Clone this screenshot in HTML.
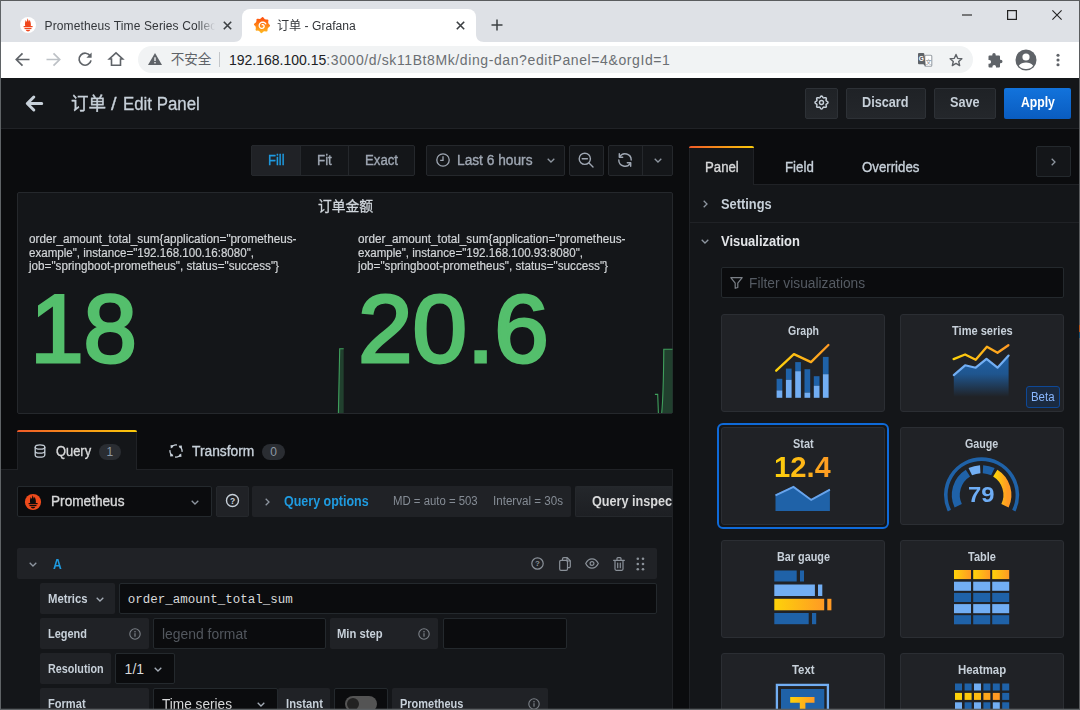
<!DOCTYPE html>
<html lang="zh">
<head>
<meta charset="utf-8">
<title>订单 - Grafana</title>
<style>
*{box-sizing:border-box;margin:0;padding:0}
html,body{width:1080px;height:710px;overflow:hidden;background:#0b0c0e}
body{font-family:"Liberation Sans","Noto Sans CJK SC",sans-serif;font-size:14px;color:#c7d0d9;position:relative}
.a{position:absolute}
.t{position:absolute;white-space:nowrap;line-height:1;transform-origin:0 50%}
svg{position:absolute;overflow:visible}
/* ---------- chrome ---------- */
#tabstrip{left:0;top:0;width:1080px;height:42px;background:#dee1e6}
#toolbar{left:0;top:42px;width:1080px;height:36px;background:#fff}
#omni{left:138px;top:46.300px;width:835px;height:26.500px;border-radius:13.500px;background:#f1f3f4}
#acttab{left:242px;top:9px;width:234px;height:33px;background:#fff;border-radius:8px 8px 0 0}
.ch{color:#202124;font-family:"Liberation Sans","Noto Sans CJK SC",sans-serif}
/* ---------- grafana ---------- */
#ghead{left:0;top:78px;width:1080px;height:51px;background:#141619;border-bottom:1px solid #202226}
.btn{position:absolute;background:#202226;border:1px solid #25272b;border-radius:2px}
.panelbg{background:#141619;border:1px solid #202226}
.inp{position:absolute;background:#0b0c0e;border:1px solid #2c3235;border-radius:3px}
.lbl{position:absolute;background:#202226;border-radius:2px}
.card{position:absolute;width:164px;height:98px;background:#202226;border:1px solid #2c3033;border-radius:3px}
.ct{position:absolute;left:0;width:164px;text-align:center;top:9px;font-size:12px;font-weight:bold;color:#c7d0d9;line-height:14px}
.b12{font-size:12px;font-weight:bold;color:#c7d0d9}
</style>
</head>
<body>
<div class="a" id="tabstrip"></div><div class="a" id="toolbar"></div><div class="a" id="omni"></div><div class="a" id="acttab"></div>
<!-- inactive tab -->
<svg style="left:20.200px;top:17.400px" width="16" height="16" viewBox="0 0 16 16"><circle cx="8" cy="8" r="8" fill="#fff"/><path d="M5.200 9C4.600 6.500 5.300 5 5.600 3C6.200 4 6.500 4.500 6.800 5C7 3.500 7.300 2.500 7.600 1.300C8.200 2.800 8.600 3.800 8.900 4.800C9.200 4.200 9.400 3.500 9.650 2.800C10.300 4.500 11.300 6.500 10.800 9z" fill="#f0461c"/><rect x="3.600" y="9" width="9" height="1.200" fill="#f0461c"/><rect x="4.500" y="10.900" width="7" height="1.200" fill="#f0461c"/><path d="M5.700 12.800h4.600c-.4 1.100-1.300 1.700-2.300 1.700s-1.900-.6-2.300-1.700z" fill="#f0461c"/></svg>
<svg style="left:222.500px;top:21px" width="9" height="9" viewBox="0 0 9 9"><path d="M.8.800l7.400 7.400M8.200.800L.8 8.200" stroke="#3c4043" stroke-width="1.600" fill="none"/></svg>
<!-- active tab curves -->
<svg style="left:234px;top:34px" width="8" height="8" viewBox="0 0 8 8"><path d="M0 8h8V0c0 5-3 8-8 8z" fill="#fff"/></svg>
<svg style="left:476px;top:34px" width="8" height="8" viewBox="0 0 8 8"><path d="M8 8H0V0c0 5 3 8 8 8z" fill="#fff"/></svg>
<!-- grafana favicon -->
<svg id="gfav" style="left:253.500px;top:17.200px" width="16" height="16" viewBox="0 0 16 16"><defs><linearGradient id="gfg" x1="0" y1="0" x2="0" y2="1"><stop offset="0" stop-color="#ff4a0c"/><stop offset="1" stop-color="#ffbb22"/></linearGradient></defs><path d="M7.49 0.76Q8.78 -0.87 9.78 0.96Q10.77 2.78 12.83 2.55Q14.89 2.31 14.31 4.31Q13.72 6.30 15.34 7.59Q16.97 8.88 15.14 9.88Q13.32 10.87 13.55 12.93Q13.79 14.99 11.79 14.41Q9.80 13.82 8.51 15.44Q7.22 17.07 6.22 15.24Q5.23 13.42 3.17 13.65Q1.11 13.89 1.69 11.89Q2.28 9.90 0.66 8.61Q-0.97 7.32 0.86 6.32Q2.68 5.33 2.45 3.27Q2.21 1.21 4.21 1.79Q6.20 2.38 7.49 0.76z" fill="url(#gfg)"/><path d="M11.85 6.85L11.35 6.27L10.75 5.80L10.10 5.47L9.40 5.26L8.69 5.20L7.99 5.26L7.34 5.46L6.74 5.77L6.23 6.17L5.81 6.66L5.50 7.20L5.30 7.78L5.22 8.38L5.25 8.96L5.39 9.52L5.63 10.02L5.95 10.46L6.34 10.82L6.77 11.10L7.24 11.28L7.72 11.36L8.20 11.35L8.65 11.25L9.06 11.07L9.41 10.83L9.70 10.53L9.93 10.19L10.07 9.83L10.14 9.46L10.14 9.09L10.07 8.75L9.94 8.44L9.76 8.18L9.53 7.96L9.29 7.80L9.03 7.70L8.76 7.66L8.51 7.67L8.28 7.73L8.07 7.82" fill="none" stroke="#fff" stroke-width="1.300" stroke-linecap="round"/></svg>
<svg style="left:455.500px;top:21px" width="9" height="9" viewBox="0 0 9 9"><path d="M.8.800l7.400 7.400M8.200.800L.8 8.200" stroke="#3c4043" stroke-width="1.600" fill="none"/></svg>
<svg style="left:491px;top:19px" width="12" height="12" viewBox="0 0 12 12"><path d="M6 .500v11M.5 6h11" stroke="#3c4043" stroke-width="1.500" fill="none"/></svg>
<!-- window controls -->
<svg style="left:962px;top:14.200px" width="10" height="2" viewBox="0 0 10 2"><rect width="10" height="1.200" y=".4" fill="#333"/></svg>
<svg style="left:1007px;top:9.600px" width="10" height="10" viewBox="0 0 10 10"><rect x=".6" y=".6" width="8.800" height="8.800" fill="none" stroke="#222" stroke-width="1.200"/></svg>
<svg style="left:1051.800px;top:9.600px" width="10" height="10" viewBox="0 0 10 10"><path d="M.4.400l9.200 9.200M9.600.400L.4 9.600" stroke="#222" stroke-width="1.100" fill="none"/></svg>
<!-- toolbar nav icons -->
<svg style="left:15px;top:52px" width="15" height="15" viewBox="0 0 15 15"><path d="M14.500 7.500H1.800M7.500 1.300L1.300 7.500l6.200 6.200" stroke="#5f6368" stroke-width="1.700" fill="none"/></svg>
<svg style="left:46px;top:52px" width="15" height="15" viewBox="0 0 15 15"><path d="M.5 7.500h12.700M7.500 1.300l6.200 6.200-6.200 6.200" stroke="#bdc1c6" stroke-width="1.700" fill="none"/></svg>
<svg style="left:77px;top:51px" width="16" height="16" viewBox="0 0 16 16"><path d="M13.300 5.200A6 6 0 1 0 14 9.300" stroke="#5f6368" stroke-width="1.700" fill="none"/><path d="M14.600 1.500v5.200H9.400z" fill="#5f6368"/></svg>
<svg style="left:108px;top:51px" width="16" height="16" viewBox="0 0 16 16"><path d="M8 1.800L1.300 8h2.200v6.300h9V8h2.200z" stroke="#5f6368" stroke-width="1.600" fill="none" stroke-linejoin="miter"/></svg>
<!-- omnibox content -->
<svg style="left:148px;top:53px" width="14" height="12" viewBox="0 0 14 12"><path d="M7 0l7 12H0z" fill="#5f6368"/><rect x="6.300" y="4.300" width="1.400" height="3.700" fill="#f1f3f4"/><rect x="6.300" y="9" width="1.400" height="1.400" fill="#f1f3f4"/></svg>
<div class="a" style="left:218.500px;top:52px;width:1px;height:15px;background:#c4c7ca"></div>
<!-- translate icon -->
<svg style="left:918px;top:52.800px" width="14" height="14" viewBox="0 0 14 14"><rect x="6.800" y="2.200" width="7" height="11" rx="1" fill="#fff" stroke="#9aa0a6" stroke-width="1.100"/><text x="7.500" y="10.800" font-size="6" fill="#80868b" font-family="Noto Sans CJK SC,sans-serif">文</text><path d="M0 1a1 1 0 0 1 1-1h4.500l.8.800L7.700 13.200 5.300 11.200H1a1 1 0 0 1-1-1z" fill="#5f6368"/><text x=".7" y="8" font-size="6.500" font-weight="bold" fill="#fff" font-family="Liberation Sans,sans-serif">G</text></svg>
<!-- star -->
<svg style="left:949.200px;top:52.700px" width="14" height="14" viewBox="0 0 16 16"><path d="M8 1.700l1.900 4.400 4.800.4-3.600 3.200 1.100 4.700L8 11.900l-4.200 2.500 1.100-4.700-3.600-3.200 4.800-.4z" stroke="#5f6368" stroke-width="1.600" fill="none" stroke-linejoin="round"/></svg>
<!-- puzzle -->
<svg style="left:987.700px;top:52.500px" width="15" height="15" viewBox="0 0 15 15"><path d="M6 0a1.700 1.700 0 0 1 1.700 1.700V2.500h3.300a1 1 0 0 1 1 1v3.300h.8a1.700 1.700 0 0 1 0 3.400H12v3.300a1 1 0 0 1-1 1H8v-.8a1.800 1.800 0 0 0-3.600 0v.8H1.500a1 1 0 0 1-1-1V10.700h.8a1.800 1.800 0 0 0 0-3.600H.5V3.500a1 1 0 0 1 1-1h2.800V1.700A1.700 1.700 0 0 1 6 0z" fill="#5f6368"/></svg>
<!-- profile -->
<svg style="left:1015px;top:49px" width="22" height="22" viewBox="0 0 22 22"><circle cx="11" cy="11" r="10.500" fill="#5f6368"/><circle cx="11" cy="8" r="3.600" fill="#fff"/><path d="M3.800 16.700c1.600-2.300 4.400-3.200 7.200-3.200s5.600.9 7.200 3.200A9 9 0 0 1 11 20a9 9 0 0 1-7.200-3.300z" fill="#fff"/></svg>
<!-- menu dots -->
<svg style="left:1056px;top:52px" width="4" height="16" viewBox="0 0 4 16"><circle cx="2" cy="3.300" r="1.550" fill="#5f6368"/><circle cx="2" cy="8" r="1.550" fill="#5f6368"/><circle cx="2" cy="12.700" r="1.550" fill="#5f6368"/></svg>


<div class="t" style="left:44.5px;top:20.04px;font-size:12px;color:#33363a;width:172px;overflow:hidden;-webkit-mask-image:linear-gradient(90deg,#000 152px,transparent 170px);letter-spacing:.13px;">Prometheus Time Series Collection and Processing Server</div>
<div class="t" style="left:277.2px;top:20.04px;font-size:12px;color:#33363a;transform:scaleX(1.0099);">订单 - Grafana</div>
<div class="t" style="left:170.7px;top:52.66px;font-size:13.6px;color:#5f6368;">不安全</div>
<div class="t" style="left:229px;top:52.76px;font-size:14px;color:#202124;">192.168.100.15<span style="color:#6b6f73;letter-spacing:.6px">:3000/d/sk11Bt8Mk/ding-dan?editPanel=4&amp;orgId=1</span></div>
<div class="a" id="ghead"></div>
<svg style="left:25px;top:95px" width="18" height="17" viewBox="0 0 18 17"><path d="M16.700 8.500H2.800M8.800 2L2.300 8.500l6.500 6.500" stroke="#c7d0d9" stroke-width="3" fill="none" stroke-linecap="round" stroke-linejoin="round"/></svg>
<div class="t" style="left:71.2px;top:94.51px;font-size:18px;color:#c7d0d9;transform:scaleX(0.9722);-webkit-text-stroke:.4px;">订单</div>
<div class="t" style="left:111.3px;top:94.51px;font-size:18px;color:#c7d0d9;transform:scaleX(1.1165);-webkit-text-stroke:.3px;">/</div>
<div class="t" style="left:123.3px;top:94.51px;font-size:18px;color:#c7d0d9;transform:scaleX(0.9359);-webkit-text-stroke:.3px;">Edit Panel</div>
<div class="a" style="left:805px;top:88px;width:33px;height:31px;border:1px solid #2d3136;border-radius:2px;background:linear-gradient(180deg,#1f2226,#24272b);"></div>
<svg style="left:813.900px;top:94.800px" width="15" height="15" viewBox="0 0 15 15"><path d="M7.50 1.00L7.92 1.11L8.30 1.43L8.62 1.86L8.89 2.31L9.14 2.67L9.41 2.88L9.76 2.93L10.19 2.85L10.69 2.72L11.23 2.64L11.72 2.69L12.10 2.90L12.31 3.28L12.36 3.77L12.28 4.31L12.15 4.81L12.07 5.24L12.12 5.59L12.33 5.86L12.69 6.11L13.14 6.38L13.57 6.70L13.89 7.08L14.00 7.50L13.89 7.92L13.57 8.30L13.14 8.62L12.69 8.89L12.33 9.14L12.12 9.41L12.07 9.76L12.15 10.19L12.28 10.69L12.36 11.23L12.31 11.72L12.10 12.10L11.72 12.31L11.23 12.36L10.69 12.28L10.19 12.15L9.76 12.07L9.41 12.12L9.14 12.33L8.89 12.69L8.62 13.14L8.30 13.57L7.92 13.89L7.50 14.00L7.08 13.89L6.70 13.57L6.38 13.14L6.11 12.69L5.86 12.33L5.59 12.12L5.24 12.07L4.81 12.15L4.31 12.28L3.77 12.36L3.28 12.31L2.90 12.10L2.69 11.72L2.64 11.23L2.72 10.69L2.85 10.19L2.93 9.76L2.88 9.41L2.67 9.14L2.31 8.89L1.86 8.62L1.43 8.30L1.11 7.92L1.00 7.50L1.11 7.08L1.43 6.70L1.86 6.38L2.31 6.11L2.67 5.86L2.88 5.59L2.93 5.24L2.85 4.81L2.72 4.31L2.64 3.77L2.69 3.28L2.90 2.90L3.28 2.69L3.77 2.64L4.31 2.72L4.81 2.85L5.24 2.93L5.59 2.88L5.86 2.67L6.11 2.31L6.38 1.86L6.70 1.43L7.08 1.11z" fill="none" stroke="#c7d0d9" stroke-width="1.500" stroke-linejoin="round"/><circle cx="7.500" cy="7.500" r="2" fill="none" stroke="#c7d0d9" stroke-width="1.400"/></svg>
<div class="a" style="left:846px;top:88px;width:80px;height:31px;border:1px solid #2d3136;border-radius:2px;background:linear-gradient(180deg,#1f2226,#24272b);"></div>
<div class="t" style="left:862.05px;top:95.46px;font-size:14px;color:#c7d0d9;font-weight:bold;transform:scaleX(0.9054);">Discard</div>
<div class="a" style="left:934px;top:88px;width:62px;height:31px;border:1px solid #2d3136;border-radius:2px;background:linear-gradient(180deg,#1f2226,#24272b);"></div>
<div class="t" style="left:949.6px;top:95.46px;font-size:14px;color:#c7d0d9;font-weight:bold;transform:scaleX(0.9051);">Save</div>
<div class="a" style="left:1004px;top:88px;width:67px;height:31px;border-radius:2px;background:linear-gradient(180deg,#1273dc,#0a5cc0);"></div>
<div class="t" style="left:1020.55px;top:95.46px;font-size:14px;color:#fff;font-weight:bold;transform:scaleX(0.8717);">Apply</div>
<div class="a" style="left:251px;top:145px;width:163.5px;height:31px;background:#141619;border:1px solid #25282c;border-radius:2px;"></div>
<div class="a" style="left:251px;top:145px;width:50px;height:31px;background:#202226;border:1px solid #25282c;border-radius:2px;border-radius:2px 0 0 2px;"></div>
<div class="a" style="left:348px;top:145px;width:1px;height:31px;background:#25282c;"></div>
<div class="t" style="left:268px;top:152.86px;font-size:14px;color:#1f9be0;transform:scaleX(0.9279);-webkit-text-stroke:.35px;">Fill</div>
<div class="t" style="left:317.2px;top:152.86px;font-size:14px;color:#9fa7b3;transform:scaleX(0.9510);-webkit-text-stroke:.35px;">Fit</div>
<div class="t" style="left:364.8px;top:152.86px;font-size:14px;color:#9fa7b3;transform:scaleX(0.9424);-webkit-text-stroke:.35px;">Exact</div>
<div class="a" style="left:426px;top:145px;width:138.5px;height:31px;background:#141619;border:1px solid #25282c;border-radius:2px;"></div>
<svg style="left:436px;top:153px" width="14" height="14" viewBox="0 0 14 14"><circle cx="7" cy="7" r="6.200" fill="none" stroke="#9fa7b3" stroke-width="1.300"/><path d="M7 3.300V7.300H4.200" fill="none" stroke="#9fa7b3" stroke-width="1.300"/></svg>
<div class="t" style="left:457px;top:152.86px;font-size:14px;color:#9fa7b3;transform:scaleX(0.9797);-webkit-text-stroke:.35px;">Last 6 hours</div>
<svg style="left:546.5px;top:157.5px" width="8" height="5" viewBox="0 0 8 5"><path d="M.7.700l3.300 3.300L7.300.700" fill="none" stroke="#8e96a0" stroke-width="1.300"/></svg>
<div class="a" style="left:569px;top:145px;width:35px;height:31px;background:#141619;border:1px solid #25282c;border-radius:2px;"></div>
<svg style="left:578px;top:152px" width="16" height="16" viewBox="0 0 16 16"><circle cx="6.800" cy="6.800" r="5.600" fill="none" stroke="#9fa7b3" stroke-width="1.400"/><path d="M4.200 6.800h5.200M11 11l4 4" fill="none" stroke="#9fa7b3" stroke-width="1.400" stroke-linecap="round"/></svg>
<div class="a" style="left:608px;top:145px;width:65px;height:31px;background:#141619;border:1px solid #25282c;border-radius:2px;"></div>
<div class="a" style="left:642px;top:145px;width:1px;height:31px;background:#25282c;"></div>
<svg style="left:617.200px;top:152px" width="16" height="16" viewBox="0 0 16 16"><path d="M2.600 4.900A6.200 6.200 0 0 1 14.200 8M13.400 11.100A6.200 6.200 0 0 1 1.800 8" fill="none" stroke="#9fa7b3" stroke-width="1.400" stroke-linecap="round"/><path d="M2.300 1.800v3.400h3.400M13.700 14.200v-3.400h-3.400" fill="none" stroke="#9fa7b3" stroke-width="1.400" stroke-linecap="round" stroke-linejoin="round"/></svg>
<svg style="left:653.5px;top:157.5px" width="8" height="5" viewBox="0 0 8 5"><path d="M.7.700l3.300 3.300L7.300.700" fill="none" stroke="#8e96a0" stroke-width="1.300"/></svg>
<div class="a" style="left:17px;top:192px;width:656px;height:222px;background:#141619;border:1px solid #25282c;border-radius:2px;"></div>
<div class="t" style="left:317.5px;top:199.36px;font-size:14px;color:#d0d6dc;transform:scaleX(0.9821);-webkit-text-stroke:.3px;">订单金额</div>
<div class="t" style="left:29px;top:232.94px;font-size:12px;color:#d2d5d8;transform:scaleX(0.9783);-webkit-text-stroke:.2px;">order_amount_total_sum{application=&quot;prometheus-</div>
<div class="t" style="left:29px;top:246.74px;font-size:12px;color:#d2d5d8;transform:scaleX(0.9644);-webkit-text-stroke:.2px;">example&quot;, instance=&quot;192.168.100.16:8080&quot;,</div>
<div class="t" style="left:29px;top:260.04px;font-size:12px;color:#d2d5d8;transform:scaleX(0.9746);-webkit-text-stroke:.2px;">job=&quot;springboot-prometheus&quot;, status=&quot;success&quot;}</div>
<div class="t" style="left:30.2px;top:281.3px;font-size:96px;color:#54bf6c;-webkit-text-stroke:3px;">18</div>
<div class="t" style="left:357.7px;top:232.94px;font-size:12px;color:#d2d5d8;transform:scaleX(0.9783);-webkit-text-stroke:.2px;">order_amount_total_sum{application=&quot;prometheus-</div>
<div class="t" style="left:357.7px;top:246.74px;font-size:12px;color:#d2d5d8;transform:scaleX(0.9644);-webkit-text-stroke:.2px;">example&quot;, instance=&quot;192.168.100.93:8080&quot;,</div>
<div class="t" style="left:357.7px;top:260.04px;font-size:12px;color:#d2d5d8;transform:scaleX(0.9746);-webkit-text-stroke:.2px;">job=&quot;springboot-prometheus&quot;, status=&quot;success&quot;}</div>
<div class="t" style="left:358px;top:281.3px;font-size:96px;color:#54bf6c;transform:scaleX(1.0210);-webkit-text-stroke:3px;">20.6</div>
<svg style="left:0;top:0" width="1080" height="710" viewBox="0 0 1080 710"><path d="M338.400 413L339.700 348.800H343.700V413z" fill="#21402e"/><path d="M338.400 413L339.700 348.800H343.700" fill="none" stroke="#3f9f5c" stroke-width="1.100"/><path d="M661.700 413C663 400 663.500 385 663.800 349.300H672.500V413z" fill="#21402e"/><path d="M654.900 394.400h2.800l.7 18.600M661.700 413C663 400 663.500 385 663.800 349.300H672.500" fill="none" stroke="#3f9f5c" stroke-width="1.100"/></svg>
<div class="a" style="left:1px;top:469px;width:671.5px;height:240px;background:#141619;border-top:1px solid #202226;border-right:1px solid #202226;"></div>
<div class="a" style="left:17px;top:430px;width:120px;height:40px;background:#141619;border:1px solid #202226;border-bottom:none;border-radius:2px 2px 0 0;"></div>
<div class="a" style="left:17px;top:430px;width:120px;height:2px;background:linear-gradient(90deg,#f05a28,#fbca0a);border-radius:2px 2px 0 0;"></div>
<svg style="left:34px;top:444px" width="12" height="14" viewBox="0 0 12 14"><ellipse cx="6" cy="3" rx="4.800" ry="2.200" fill="none" stroke="#c7d0d9" stroke-width="1.300"/><path d="M1.200 3v8c0 1.200 2.100 2.200 4.800 2.200s4.800-1 4.800-2.200V3M1.200 7c0 1.200 2.100 2.200 4.800 2.200S10.800 8.200 10.800 7" fill="none" stroke="#c7d0d9" stroke-width="1.300"/></svg>
<div class="t" style="left:55.6px;top:443.96px;font-size:14px;color:#d8d9da;transform:scaleX(0.9207);-webkit-text-stroke:.35px;">Query</div>
<div class="a" style="left:99px;top:444px;width:22px;height:16px;background:#2a2d32;border-radius:8px;"></div>
<div class="t" style="left:106.56px;top:445.74px;font-size:12px;color:#8e99a4;">1</div>
<svg style="left:168.500px;top:443.500px" width="14" height="14" viewBox="0 0 14 14"><g transform="rotate(0 7 7)"><path d="M7.900 1A6.100 6.100 0 0 0 4 1.700" fill="none" stroke="#c7d0d9" stroke-width="1.300"/><path d="M1.500 1.200L4.700 1L3.900 3.300L1.800 4.400z" fill="#c7d0d9"/></g><g transform="rotate(90 7 7)"><path d="M7.900 1A6.100 6.100 0 0 0 4 1.700" fill="none" stroke="#c7d0d9" stroke-width="1.300"/><path d="M1.500 1.200L4.700 1L3.900 3.300L1.800 4.400z" fill="#c7d0d9"/></g><g transform="rotate(180 7 7)"><path d="M7.900 1A6.100 6.100 0 0 0 4 1.700" fill="none" stroke="#c7d0d9" stroke-width="1.300"/><path d="M1.500 1.200L4.700 1L3.900 3.300L1.800 4.400z" fill="#c7d0d9"/></g><g transform="rotate(270 7 7)"><path d="M7.900 1A6.100 6.100 0 0 0 4 1.700" fill="none" stroke="#c7d0d9" stroke-width="1.300"/><path d="M1.500 1.200L4.700 1L3.900 3.300L1.800 4.400z" fill="#c7d0d9"/></g></svg>
<div class="t" style="left:191.7px;top:443.96px;font-size:14px;color:#c7d0d9;transform:scaleX(0.9845);-webkit-text-stroke:.35px;">Transform</div>
<div class="a" style="left:262px;top:444px;width:23px;height:16px;background:#2a2d32;border-radius:8px;"></div>
<div class="t" style="left:270.16px;top:445.74px;font-size:12px;color:#8e99a4;">0</div>
<div class="a" style="left:17px;top:486px;width:194.5px;height:30.5px;background:#0b0c0e;border:1px solid #24292d;border-radius:2px;"></div>
<svg style="left:25px;top:494.2px" width="16" height="16" viewBox="0 0 16 16"><circle cx="8" cy="8" r="8.100" fill="#ee4b1c"/><path d="M5.200 9C4.600 6.500 5.300 5 5.600 3C6.200 4 6.500 4.500 6.800 5C7 3.500 7.300 2.500 7.600 1.300C8.200 2.800 8.600 3.800 8.900 4.800C9.200 4.200 9.400 3.500 9.650 2.800C10.300 4.500 11.300 6.500 10.800 9z" fill="#0d0b0b"/><rect x="3.600" y="9" width="9" height="1.200" fill="#0d0b0b"/><rect x="4.500" y="10.900" width="7" height="1.200" fill="#0d0b0b"/><path d="M5.700 12.800h4.600c-.4 1.100-1.300 1.700-2.300 1.700s-1.900-.6-2.300-1.700z" fill="#0d0b0b"/></svg>
<div class="t" style="left:50.6px;top:494.36px;font-size:14px;color:#d8d9da;transform:scaleX(0.9737);-webkit-text-stroke:.35px;">Prometheus</div>
<svg style="left:190.5px;top:499.5px" width="8" height="5" viewBox="0 0 8 5"><path d="M.7.700l3.300 3.300L7.300.700" fill="none" stroke="#8e96a0" stroke-width="1.300"/></svg>
<div class="a" style="left:215.5px;top:486px;width:33.5px;height:30.5px;background:#202226;border:1px solid #25282c;border-radius:2px;"></div>
<svg style="left:225.600px;top:494px" width="13" height="13" viewBox="0 0 13 13"><circle cx="6.500" cy="6.500" r="6" fill="none" stroke="#c7d0d9" stroke-width="1.400"/><text x="6.500" y="9.600" font-size="8.500" font-weight="bold" fill="#c7d0d9" text-anchor="middle" font-family="Liberation Sans,sans-serif">?</text></svg>
<div class="a" style="left:252px;top:486px;width:319px;height:30.5px;background:#202226;border-radius:2px;"></div>
<svg style="left:264.5px;top:497.5px" width="5" height="8" viewBox="0 0 5 8"><path d="M.7.700l3.300 3.300L.7 7.300" fill="none" stroke="#8e96a0" stroke-width="1.300"/></svg>
<div class="t" style="left:284px;top:494.36px;font-size:14px;color:#1f9be0;font-weight:bold;transform:scaleX(0.8914);">Query options</div>
<div class="t" style="left:393px;top:494.94px;font-size:12px;color:#858c95;transform:scaleX(0.9475);">MD = auto = 503</div>
<div class="t" style="left:493px;top:494.94px;font-size:12px;color:#858c95;transform:scaleX(0.9672);">Interval = 30s</div>
<div class="a" style="left:575px;top:486px;width:97px;height:30.5px;border:1px solid #25282c;border-radius:2px;background:linear-gradient(180deg,#24272b,#1d1f23);border-right:none;border-radius:2px 0 0 2px;"></div>
<div class="t" style="left:592px;top:494.16px;font-size:14px;color:#d8d9da;font-weight:bold;transform:scaleX(0.9034);clip-path:inset(0 17.5% 0 0);">Query inspector</div>
<div class="a" style="left:17px;top:548px;width:639.5px;height:31px;background:#202226;border-radius:2px;"></div>
<svg style="left:28.5px;top:561.5px" width="8" height="5" viewBox="0 0 8 5"><path d="M.7.700l3.300 3.300L7.300.700" fill="none" stroke="#8e96a0" stroke-width="1.300"/></svg>
<div class="t" style="left:52.6px;top:557.16px;font-size:14px;color:#1f9be0;font-weight:bold;transform:scaleX(0.8691);">A</div>
<svg style="left:531px;top:557px" width="13" height="13" viewBox="0 0 13 13"><circle cx="6.500" cy="6.500" r="5.700" fill="none" stroke="#8a9199" stroke-width="1.200"/><text x="6.500" y="9.400" font-size="8" font-weight="bold" fill="#8a9199" text-anchor="middle" font-family="Liberation Sans,sans-serif">?</text></svg>
<svg style="left:558.500px;top:556.500px" width="12" height="14" viewBox="0 0 12 14"><path d="M3.500 3.200V2a1.300 1.300 0 0 1 1.300-1.300h3.400L11.300 3.800V9.300a1.300 1.300 0 0 1-1.300 1.300H8.500M8 .800V4h3.200" fill="none" stroke="#8a9199" stroke-width="1.200"/><rect x=".7" y="3.300" width="7.800" height="10" rx="1.300" fill="none" stroke="#8a9199" stroke-width="1.200"/></svg>
<svg style="left:585px;top:558px" width="14" height="11" viewBox="0 0 14 11"><path d="M.7 5.500C2.200 2.500 4.400.900 7 .900s4.800 1.600 6.300 4.600C11.800 8.500 9.600 10.100 7 10.100S2.200 8.500.7 5.500z" fill="none" stroke="#8a9199" stroke-width="1.200"/><circle cx="7" cy="5.500" r="1.900" fill="none" stroke="#8a9199" stroke-width="1.200"/></svg>
<svg style="left:613px;top:556.500px" width="12" height="14" viewBox="0 0 12 14"><path d="M.6 3.300h10.800M4 3.200V1.600a.9.900 0 0 1 .9-.9h2.200a.9.900 0 0 1 .9.900v1.600M2 3.400v8.700a1.200 1.200 0 0 0 1.200 1.200h5.600a1.200 1.200 0 0 0 1.200-1.200V3.400M4.700 6v4.700M7.300 6v4.700" fill="none" stroke="#8a9199" stroke-width="1.200" stroke-linecap="round"/></svg>
<svg style="left:635.500px;top:556.500px" width="9" height="14" viewBox="0 0 9 14"><g fill="#8a9199"><circle cx="1.800" cy="1.800" r="1.300"/><circle cx="7" cy="1.800" r="1.300"/><circle cx="1.800" cy="7" r="1.300"/><circle cx="7" cy="7" r="1.300"/><circle cx="1.800" cy="12.200" r="1.300"/><circle cx="7" cy="12.200" r="1.300"/></g></svg>
<div class="a" style="left:40px;top:583px;width:75px;height:31px;background:#202226;border-radius:2px;"></div>
<div class="t" style="left:47.6px;top:592.84px;font-size:12px;color:#c7d0d9;font-weight:bold;transform:scaleX(0.9422);">Metrics</div>
<svg style="left:95.5px;top:597.0px" width="8" height="5" viewBox="0 0 8 5"><path d="M.7.700l3.300 3.300L7.300.700" fill="none" stroke="#a4acb6" stroke-width="1.300"/></svg>
<div class="a" style="left:119px;top:583px;width:537.5px;height:31px;background:#0b0c0e;border:1px solid #24292d;border-radius:2px;"></div>
<div class="t" style="left:127.8px;top:593.69px;font-size:12.5px;color:#d8d9da;font-family:'Liberation Mono','DejaVu Sans Mono',monospace;">order_amount_total_sum</div>
<div class="a" style="left:40px;top:618px;width:109px;height:31px;background:#202226;border-radius:2px;"></div>
<div class="t" style="left:47.6px;top:627.74px;font-size:12px;color:#c7d0d9;font-weight:bold;transform:scaleX(0.9116);">Legend</div>
<svg style="left:128.6px;top:627.8px" width="12" height="12" viewBox="0 0 12 12"><circle cx="6" cy="6" r="5.200" fill="none" stroke="#7b8087" stroke-width="1.100"/><circle cx="6" cy="3.700" r=".8" fill="#7b8087"/><rect x="5.400" y="5.200" width="1.200" height="3.500" fill="#7b8087"/></svg>
<div class="a" style="left:153px;top:618px;width:172.5px;height:31px;background:#0b0c0e;border:1px solid #24292d;border-radius:2px;"></div>
<div class="t" style="left:162px;top:626.96px;font-size:14px;color:#52575e;transform:scaleX(0.9929);">legend format</div>
<div class="a" style="left:329.5px;top:618px;width:108.5px;height:31px;background:#202226;border-radius:2px;"></div>
<div class="t" style="left:337.2px;top:627.74px;font-size:12px;color:#c7d0d9;font-weight:bold;transform:scaleX(0.9369);">Min step</div>
<svg style="left:418.2px;top:627.8px" width="12" height="12" viewBox="0 0 12 12"><circle cx="6" cy="6" r="5.200" fill="none" stroke="#7b8087" stroke-width="1.100"/><circle cx="6" cy="3.700" r=".8" fill="#7b8087"/><rect x="5.400" y="5.200" width="1.200" height="3.500" fill="#7b8087"/></svg>
<div class="a" style="left:442.5px;top:618px;width:124.5px;height:31px;background:#0b0c0e;border:1px solid #24292d;border-radius:2px;"></div>
<div class="a" style="left:40px;top:653px;width:71px;height:31px;background:#202226;border-radius:2px;"></div>
<div class="t" style="left:47.6px;top:662.74px;font-size:12px;color:#c7d0d9;font-weight:bold;transform:scaleX(0.8984);">Resolution</div>
<div class="a" style="left:115px;top:653px;width:59.5px;height:31px;background:#0b0c0e;border:1px solid #24292d;border-radius:2px;"></div>
<div class="t" style="left:124.6px;top:661.96px;font-size:14px;color:#d8d9da;">1/1</div>
<svg style="left:154px;top:667.0px" width="8" height="5" viewBox="0 0 8 5"><path d="M.7.700l3.300 3.300L7.300.700" fill="none" stroke="#a4acb6" stroke-width="1.300"/></svg>
<div class="a" style="left:40px;top:688px;width:109px;height:31px;background:#202226;border-radius:2px;"></div>
<div class="t" style="left:47.6px;top:697.84px;font-size:12px;color:#c7d0d9;font-weight:bold;transform:scaleX(0.9245);">Format</div>
<div class="a" style="left:153px;top:688px;width:124.5px;height:31px;background:#0b0c0e;border:1px solid #24292d;border-radius:2px;"></div>
<div class="t" style="left:162px;top:696.96px;font-size:14px;color:#d8d9da;transform:scaleX(0.9745);">Time series</div>
<svg style="left:257.4px;top:702.0px" width="8" height="5" viewBox="0 0 8 5"><path d="M.7.700l3.300 3.300L7.300.700" fill="none" stroke="#a4acb6" stroke-width="1.300"/></svg>
<div class="a" style="left:278px;top:688px;width:51.5px;height:31px;background:#202226;border-radius:2px;"></div>
<div class="t" style="left:285.8px;top:697.84px;font-size:12px;color:#c7d0d9;font-weight:bold;transform:scaleX(0.9379);">Instant</div>
<div class="a" style="left:333.5px;top:688px;width:54.0px;height:31px;background:#0b0c0e;border:1px solid #24292d;border-radius:2px;"></div>
<div class="a" style="left:345px;top:695.7px;width:32px;height:16.0px;background:#545454;border-radius:8px;"></div>
<div class="a" style="left:347px;top:697.8px;width:12px;height:12.0px;background:#222222;border-radius:6px;"></div>
<div class="a" style="left:391.5px;top:688px;width:156.5px;height:31px;background:#202226;border-radius:2px;"></div>
<div class="t" style="left:400.4px;top:697.84px;font-size:12px;color:#c7d0d9;font-weight:bold;transform:scaleX(0.9141);">Prometheus</div>
<svg style="left:527.7px;top:697.8px" width="12" height="12" viewBox="0 0 12 12"><circle cx="6" cy="6" r="5.200" fill="none" stroke="#7b8087" stroke-width="1.100"/><circle cx="6" cy="3.700" r=".8" fill="#7b8087"/><rect x="5.400" y="5.200" width="1.200" height="3.500" fill="#7b8087"/></svg>
<div class="a" style="left:689px;top:184px;width:390px;height:526px;background:#141619;border-top:1px solid #202226;border-left:1px solid #202226;"></div>
<div class="a" style="left:689px;top:146px;width:65px;height:39px;background:#141619;border:1px solid #202226;border-bottom:none;border-radius:2px 2px 0 0;"></div>
<div class="a" style="left:689px;top:146px;width:65px;height:2px;background:linear-gradient(90deg,#f05a28,#fbca0a);border-radius:2px 2px 0 0;"></div>
<div class="t" style="left:705px;top:159.96px;font-size:14px;color:#d8d9da;transform:scaleX(0.9438);-webkit-text-stroke:.35px;">Panel</div>
<div class="t" style="left:785.3px;top:159.96px;font-size:14px;color:#c7d0d9;transform:scaleX(0.9486);-webkit-text-stroke:.35px;">Field</div>
<div class="t" style="left:861.8px;top:159.96px;font-size:14px;color:#c7d0d9;transform:scaleX(0.9458);-webkit-text-stroke:.35px;">Overrides</div>
<div class="a" style="left:1036px;top:146px;width:35px;height:31px;background:#141619;border:1px solid #24292d;border-radius:2px;"></div>
<svg style="left:1051.0px;top:157.5px" width="5" height="8" viewBox="0 0 5 8"><path d="M.7.700l3.300 3.300L.7 7.300" fill="none" stroke="#8e96a0" stroke-width="1.300"/></svg>
<svg style="left:703.0px;top:200.0px" width="5" height="8" viewBox="0 0 5 8"><path d="M.7.700l3.300 3.300L.7 7.300" fill="none" stroke="#8e96a0" stroke-width="1.300"/></svg>
<div class="t" style="left:720.9px;top:197.16px;font-size:14px;color:#c7d0d9;font-weight:bold;transform:scaleX(0.9161);">Settings</div>
<div class="a" style="left:690px;top:222px;width:389px;height:1px;background:#202226;"></div>
<svg style="left:701px;top:238.5px" width="8" height="5" viewBox="0 0 8 5"><path d="M.7.700l3.300 3.300L7.300.700" fill="none" stroke="#8e96a0" stroke-width="1.300"/></svg>
<div class="t" style="left:720.9px;top:233.96px;font-size:14px;color:#e3e5e8;font-weight:bold;transform:scaleX(0.9247);">Visualization</div>
<div class="a" style="left:721px;top:267px;width:342.5px;height:30.5px;background:#0b0c0e;border:1px solid #24292d;border-radius:2px;"></div>
<svg style="left:730px;top:276.500px" width="13" height="12" viewBox="0 0 13 12"><path d="M.8.700h11.400L7.800 6.200v4.300L5.200 11.300V6.200z" fill="none" stroke="#7b8087" stroke-width="1.200" stroke-linejoin="round"/></svg>
<div class="t" style="left:749.4px;top:276.06px;font-size:14px;color:#555b63;transform:scaleX(0.9817);">Filter visualizations</div>
<div class="a" style="left:721px;top:314px;width:164px;height:98px;background:#202226;border:1px solid #2b2e33;border-radius:3px;"></div>
<div class="t" style="left:787.5px;top:325.04px;font-size:12px;color:#c7d0d9;font-weight:bold;transform:scaleX(0.8771);">Graph</div>
<div class="a" style="left:900px;top:314px;width:164px;height:98px;background:#202226;border:1px solid #2b2e33;border-radius:3px;"></div>
<div class="t" style="left:951.65px;top:325.04px;font-size:12px;color:#c7d0d9;font-weight:bold;transform:scaleX(0.9221);">Time series</div>
<div class="a" style="left:717px;top:423px;width:172px;height:106px;border-radius:6px;border:2px solid #0f6ad8;"></div>
<div class="a" style="left:721px;top:427px;width:164px;height:98px;background:#202226;border:1px solid #2b2e33;border-radius:3px;"></div>
<div class="t" style="left:792.7px;top:438.04px;font-size:12px;color:#c7d0d9;font-weight:bold;transform:scaleX(0.9086);">Stat</div>
<div class="a" style="left:900px;top:427px;width:164px;height:98px;background:#202226;border:1px solid #2b2e33;border-radius:3px;"></div>
<div class="t" style="left:965.35px;top:438.04px;font-size:12px;color:#c7d0d9;font-weight:bold;transform:scaleX(0.8917);">Gauge</div>
<div class="a" style="left:721px;top:540px;width:164px;height:98px;background:#202226;border:1px solid #2b2e33;border-radius:3px;"></div>
<div class="t" style="left:776.5px;top:551.04px;font-size:12px;color:#c7d0d9;font-weight:bold;transform:scaleX(0.9031);">Bar gauge</div>
<div class="a" style="left:900px;top:540px;width:164px;height:98px;background:#202226;border:1px solid #2b2e33;border-radius:3px;"></div>
<div class="t" style="left:968.05px;top:551.04px;font-size:12px;color:#c7d0d9;font-weight:bold;transform:scaleX(0.9162);">Table</div>
<div class="a" style="left:721px;top:653px;width:164px;height:98px;background:#202226;border:1px solid #2b2e33;border-radius:3px;"></div>
<div class="t" style="left:791.7px;top:664.04px;font-size:12px;color:#c7d0d9;font-weight:bold;transform:scaleX(0.9497);">Text</div>
<div class="a" style="left:900px;top:653px;width:164px;height:98px;background:#202226;border:1px solid #2b2e33;border-radius:3px;"></div>
<div class="t" style="left:957.95px;top:664.04px;font-size:12px;color:#c7d0d9;font-weight:bold;transform:scaleX(0.9490);">Heatmap</div>
<svg style="left:0;top:0" width="1080" height="710" viewBox="0 0 1080 710"><defs><linearGradient id="yo" x1="0" y1="0" x2="1" y2="0"><stop offset="0" stop-color="#fdd20a"/><stop offset="1" stop-color="#ff9a24"/></linearGradient><linearGradient id="tsf" x1="0" y1="0" x2="0" y2="1"><stop offset="0" stop-color="#1f62a8"/><stop offset=".45" stop-color="#1f62a8" stop-opacity=".8"/><stop offset="1" stop-color="#1f62a8" stop-opacity="0"/></linearGradient></defs><rect x="776.6" y="378.8" width="5.700" height="11.6" fill="#1f62a8"/><rect x="776.6" y="390.4" width="5.700" height="7.4" fill="#72aef3"/><rect x="785.9" y="368.6" width="5.700" height="11.2" fill="#1f62a8"/><rect x="785.9" y="379.8" width="5.700" height="18.0" fill="#72aef3"/><rect x="795.2" y="362.1" width="5.700" height="9.1" fill="#1f62a8"/><rect x="795.2" y="371.2" width="5.700" height="26.6" fill="#72aef3"/><rect x="804.5" y="369.2" width="5.700" height="23.4" fill="#1f62a8"/><rect x="804.5" y="392.6" width="5.700" height="5.2" fill="#72aef3"/><rect x="813.8" y="376.2" width="5.700" height="9.5" fill="#1f62a8"/><rect x="813.8" y="385.7" width="5.700" height="12.1" fill="#72aef3"/><rect x="822.9" y="356.9" width="5.700" height="17.3" fill="#1f62a8"/><rect x="822.9" y="374.2" width="5.700" height="23.6" fill="#72aef3"/><path d="M776.200 370.700L793.900 354.100L811 362.100L828.400 345" fill="none" stroke="url(#yo)" stroke-width="2.300" stroke-linecap="round" stroke-linejoin="round"/><path d="M953.800 375.100L965.100 365.300L975.700 367.700L986.500 358.800L997.500 367.700L1008.600 355.600V396.900H953.800z" fill="url(#tsf)"/><path d="M953.800 375.100L965.100 365.300L975.700 367.700L986.500 358.800L997.500 367.700L1008.600 355.600" fill="none" stroke="#72aef3" stroke-width="2.200" stroke-linecap="round" stroke-linejoin="round"/><path d="M953.600 359.100L965.100 354.500L975.700 359.700L986.900 346.700L997.500 352.800L1008.400 345.200" fill="none" stroke="url(#yo)" stroke-width="2.300" stroke-linecap="round" stroke-linejoin="round"/><path d="M775.500 494.600L793.500 486.200L811.200 499.200L829.900 489V511H775.500z" fill="#1f62a8"/><path d="M775.500 495.300L793.500 486.900L811.200 499.900L829.900 489.700" fill="none" stroke="#68a4ec" stroke-width="1.900"/><path d="M949.42 510.59A35.8 35.8 0 1 1 1013.78 510.59" fill="none" stroke="#1f62a8" stroke-width="3.600"/><path d="M958.22 505.80A25.8 25.8 0 0 1 967.93 473.02" fill="none" stroke="#1f62a8" stroke-width="8"/><path d="M970.29 471.71A25.8 25.8 0 0 1 980.25 469.14" fill="none" stroke="#72aef3" stroke-width="8"/><path d="M982.95 469.14A25.8 25.8 0 0 1 992.91 471.71" fill="none" stroke="#1f62a8" stroke-width="8"/><path d="M995.27 473.02A25.8 25.8 0 0 1 1004.98 505.80" fill="none" stroke="url(#yo)" stroke-width="8"/><rect x="774.300" y="570.5" width="22.4" height="11.0" fill="#1f62a8"/><rect x="800" y="570.5" width="4" height="11.0" fill="#1f62a8"/><rect x="774.300" y="584.5" width="40.6" height="11.5" fill="#72aef3"/><rect x="818" y="584.5" width="4.3" height="11.5" fill="#72aef3"/><rect x="774.300" y="598.8" width="49.9" height="11.5" fill="url(#yo)"/><rect x="827.3" y="598.8" width="4.1" height="11.5" fill="#ff9a24"/><rect x="774.300" y="613" width="34.4" height="11.2" fill="#1f62a8"/><rect x="812" y="613" width="4.2" height="11.2" fill="#1f62a8"/><rect x="954" y="570" width="17" height="9.100" fill="url(#yo)"/><rect x="973.2" y="570" width="17" height="9.100" fill="url(#yo)"/><rect x="992.2" y="570" width="17" height="9.100" fill="url(#yo)"/><rect x="954" y="581.7" width="17" height="9.100" fill="#72aef3"/><rect x="973.2" y="581.7" width="17" height="9.100" fill="#72aef3"/><rect x="992.2" y="581.7" width="17" height="9.100" fill="#72aef3"/><rect x="954" y="592.9" width="17" height="9.100" fill="#1f62a8"/><rect x="973.2" y="592.9" width="17" height="9.100" fill="#1f62a8"/><rect x="992.2" y="592.9" width="17" height="9.100" fill="#1f62a8"/><rect x="954" y="604.1" width="17" height="9.100" fill="#72aef3"/><rect x="973.2" y="604.1" width="17" height="9.100" fill="#72aef3"/><rect x="992.2" y="604.1" width="17" height="9.100" fill="#72aef3"/><rect x="954" y="615.2" width="17" height="9.100" fill="#1f62a8"/><rect x="973.2" y="615.2" width="17" height="9.100" fill="#1f62a8"/><rect x="992.2" y="615.2" width="17" height="9.100" fill="#1f62a8"/><rect x="776.900" y="684.900" width="51" height="40" fill="none" stroke="#72aef3" stroke-width="2.300"/><rect x="781" y="689" width="43.300" height="36" fill="#1f62a8"/><path d="M790.200 696.900h24.300v5.900h-9.100v12h-5.600v-12h-9.600z" fill="url(#yo)"/><rect x="955" y="683.5" width="7" height="7" fill="#1f62a8"/><rect x="964.6" y="683.5" width="7" height="7" fill="#1f62a8"/><rect x="974" y="683.5" width="7" height="7" fill="#72aef3"/><rect x="983.4" y="683.5" width="7" height="7" fill="#1f62a8"/><rect x="992.8" y="683.5" width="7" height="7" fill="#1f62a8"/><rect x="1002.2" y="683.5" width="7" height="7" fill="#1f62a8"/><rect x="955" y="692.9" width="7" height="7" fill="#fdd20a"/><rect x="964.6" y="692.9" width="7" height="7" fill="#fdc80c"/><rect x="974" y="692.9" width="7" height="7" fill="#fdbb12"/><rect x="983.4" y="692.9" width="7" height="7" fill="#fea61c"/><rect x="992.8" y="692.9" width="7" height="7" fill="#ff9a24"/><rect x="1002.2" y="692.9" width="7" height="7" fill="#1f62a8"/><rect x="955" y="702.3" width="7" height="7" fill="#72aef3"/><rect x="964.6" y="702.3" width="7" height="7" fill="#1f62a8"/><rect x="974" y="702.3" width="7" height="7" fill="#72aef3"/><rect x="983.4" y="702.3" width="7" height="7" fill="#1f62a8"/><rect x="992.8" y="702.3" width="7" height="7" fill="#72aef3"/><rect x="1002.2" y="702.3" width="7" height="7" fill="#1f62a8"/></svg>
<div class="t" style="left:774.2px;top:452.49px;font-size:29.5px;color:#fdc010;font-weight:bold;transform:scaleX(0.9927);background:linear-gradient(90deg,#fdd20a,#ff9a24);-webkit-background-clip:text;background-clip:text;-webkit-text-fill-color:transparent;">12.4</div>
<div class="t" style="left:968.35px;top:484.25px;font-size:22px;color:#6eadf5;font-weight:bold;transform:scaleX(1.0823);">79</div>
<div class="a" style="left:1026px;top:386px;width:33.5px;height:22px;background:#1a2a40;border:1px solid #0e4896;border-radius:3px;"></div>
<div class="t" style="left:1031.25px;top:390.94px;font-size:12px;color:#8ab8ff;transform:scaleX(0.9519);">Beta</div>
<div class="a" style="left:0;top:708px;width:1080px;height:1px;background:rgba(93,97,100,.3)"></div>
<div class="a" style="left:0;top:0;width:1080px;height:1px;background:#5a5c5e"></div><div class="a" style="left:0;top:0;width:1px;height:710px;background:#5f6366"></div><div class="a" style="left:1079px;top:0;width:1px;height:710px;background:#5a5c5e"></div><div class="a" style="left:0;top:709px;width:1080px;height:1px;background:#5d6164"></div>
<div class="a" style="left:1079px;top:325px;width:1px;height:7px;background:#b5561d;"></div>
<div class="a" style="left:1079px;top:332px;width:1px;height:6px;background:#1d4f6e;"></div>
</body>
</html>
